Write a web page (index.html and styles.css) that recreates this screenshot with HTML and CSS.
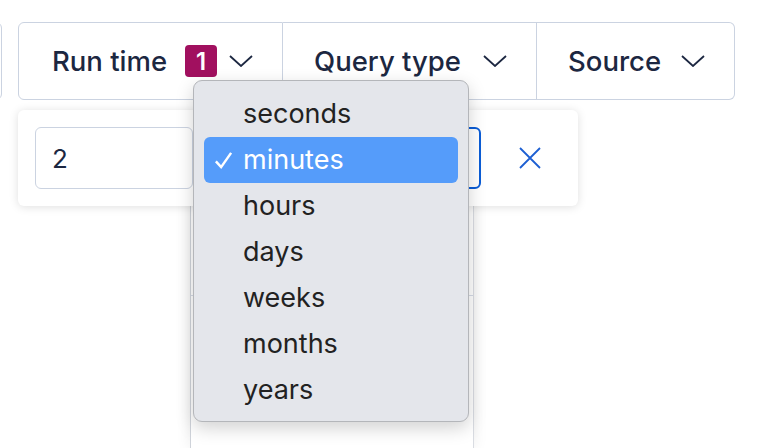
FILE: index.html
```html
<!DOCTYPE html>
<html lang="en">
<head>
  <meta charset="UTF-8" />
  <title>Run time filter</title>
  <link rel="stylesheet" href="styles.css">
</head>
<body>

  <div class="toolbar">
    <div class="prev-group"></div>
    <div class="filter-group">
      <button class="filter-btn run-time">
        <span>Run time</span>
        <span class="badge">1</span>
        <svg class="chevron" viewBox="0 0 24 12"><path d="M1 1 L12 11 L23 1" /></svg>
      </button>
      <button class="filter-btn query-type">
        <span>Query type</span>
        <svg class="chevron" viewBox="0 0 24 12"><path d="M1 1 L12 11 L23 1" /></svg>
      </button>
      <button class="filter-btn source">
        <span>Source</span>
        <svg class="chevron" viewBox="0 0 24 12"><path d="M1 1 L12 11 L23 1" /></svg>
      </button>
    </div>
  </div>

  <div class="stage">
    <div class="backdrop">
      <div class="backdrop-row"></div>
    </div>

    <div class="panel">
      <input class="amount" type="text" value="2">
      <div class="unit-select"></div>
      <button class="clear">
        <svg viewBox="0 0 22 22"><path d="M1 1 L21 21 M21 1 L1 21" /></svg>
      </button>
    </div>

    <ul class="menu">
      <li>seconds</li>
      <li class="selected">
        <svg class="check" viewBox="0 0 20 20"><path d="M2 11 L7.5 17 L18 2" /></svg>
        minutes
      </li>
      <li>hours</li>
      <li>days</li>
      <li>weeks</li>
      <li>months</li>
      <li>years</li>
    </ul>
  </div>

</body>
</html>
```

FILE: styles.css
```css
html, body {
  height: 448px;
  overflow: hidden;
}

body {
  margin: 0;
  background: #fff;
  font-family: Inter, "Noto Sans", sans-serif;
  color: #1c2741;
}

.toolbar {
  display: flex;
  gap: 16px;
  padding-top: 22px;
}

.prev-group {
  width: 40px;
  height: 78px;
  margin-left: -38px;
  box-sizing: border-box;
  border: 1.5px solid #cbd3e1;
  border-radius: 0 6px 6px 0;
}

.filter-group {
  display: flex;
  height: 78px;
}

.filter-btn {
  display: flex;
  align-items: center;
  background: #fff;
  border: 1.5px solid #cbd3e1;
  border-left: none;
  font-family: inherit;
  font-size: 27.5px;
  font-weight: 500;
  color: #1c2741;
  padding: 0 29px 0 33px;
  margin: 0;
}

.filter-btn.run-time {
  width: 265px;
  border-left: 1.5px solid #cbd3e1;
  border-radius: 6px 0 0 6px;
}

.filter-btn.query-type {
  width: 254px;
  padding-left: 31px;
}

.filter-btn.source {
  width: 198px;
  padding-left: 31px;
  border-radius: 0 6px 6px 0;
}

.badge {
  display: inline-flex;
  align-items: center;
  justify-content: center;
  width: 32px;
  height: 32px;
  margin-left: 18px;
  border-radius: 4px;
  background: #a1105f;
  color: #fff;
  font-size: 24px;
  font-weight: 600;
}

.chevron {
  width: 24px;
  height: 12px;
  margin-left: auto;
  fill: none;
  stroke: #1c2741;
  stroke-width: 1.8;
}

.stage {
  position: relative;
  height: 348px;
  padding-top: 10px;
  box-sizing: border-box;
}

.backdrop {
  position: absolute;
  left: 190px;
  top: 90px;
  width: 284px;
  height: 258px;
  box-sizing: border-box;
  background: #fff;
  border-left: 1px solid #cfd3da;
  border-right: 1px solid #d9dce2;
  box-shadow: 0 0 14px rgba(0, 0, 0, 0.08);
}

.backdrop-row {
  height: 105px;
  border-bottom: 1px solid #d5dbe7;
}

.panel {
  position: relative;
  display: flex;
  align-items: center;
  width: 560px;
  height: 96px;
  margin-left: 18px;
  padding: 0 17px;
  box-sizing: border-box;
  background: #fff;
  border-radius: 6px;
  box-shadow: 0 1px 10px rgba(0, 0, 0, 0.13);
}

.amount {
  width: 158px;
  height: 62px;
  box-sizing: border-box;
  border: 1.5px solid #cbd3e1;
  border-radius: 6px;
  padding: 0 16px;
  font-family: inherit;
  font-size: 26px;
  color: #1c2741;
  outline: none;
}

.unit-select {
  width: 272px;
  height: 62px;
  margin-left: 16px;
  box-sizing: border-box;
  border: 2.5px solid #0b5dd7;
  border-radius: 6px;
}

.clear {
  background: none;
  border: none;
  padding: 0;
  margin-left: 38px;
  width: 22px;
  height: 22px;
}

.clear svg {
  width: 22px;
  height: 22px;
  fill: none;
  stroke: #1d5fd2;
  stroke-width: 1.8;
}

.menu {
  position: absolute;
  left: 193px;
  top: -20px;
  width: 276px;
  margin: 0;
  padding: 10px 10px 8px;
  box-sizing: border-box;
  list-style: none;
  background: #e4e6eb;
  border: 1px solid #b4b6ba;
  border-radius: 9px;
  box-shadow: 0 6px 18px rgba(0, 0, 0, 0.18);
  font-size: 27px;
  color: #222;
}

.menu li {
  position: relative;
  height: 46px;
  line-height: 46px;
  padding-left: 39px;
  border-radius: 6px;
}

.menu li.selected {
  background: #559cfa;
  color: #fff;
}

.check {
  position: absolute;
  left: 10px;
  top: 14px;
  width: 19px;
  height: 19px;
  fill: none;
  stroke: #fff;
  stroke-width: 2.6;
}
```
